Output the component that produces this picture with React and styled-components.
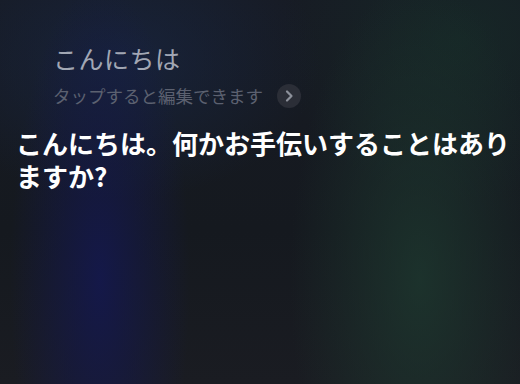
import React from 'react'
import styled, { createGlobalStyle } from 'styled-components';

const GlobalStyle = createGlobalStyle`
  html, body {
    margin: 0;
    padding: 0;
    background: #161a22;
  }
`

const App = () => {

  return (
    <Screen>
      <GlobalStyle />
      <Query>
        <Spoken>こんにちは</Spoken>
        <EditRow>
          <Hint>タップすると編集できます</Hint>
          <Chevron>
            <svg width="10" height="14" viewBox="0 0 10 14">
              <path d="M3 2.5 L7.5 7 L3 11.5" fill="none" stroke="#8d919b" strokeWidth="2.2" strokeLinecap="round" strokeLinejoin="round" />
            </svg>
          </Chevron>
        </EditRow>
      </Query>
      <Answer>こんにちは。何かお手伝いすることはありますか?</Answer>
    </Screen>
  )
}

const Screen = styled.main`
  width: 520px;
  height: 384px;
  overflow: hidden;
  box-sizing: border-box;
  padding: 41px 4px 0 16px;
  font-family: "Noto Sans CJK JP", "Noto Sans", sans-serif;
  background:
    radial-gradient(ellipse 90px 300px at 100px 280px, rgba(20, 24, 80, 0.85), rgba(20, 24, 80, 0) 100%),
    radial-gradient(ellipse 200px 140px at 120px 60px, rgba(24, 38, 68, 0.7), rgba(24, 38, 68, 0) 100%),
    radial-gradient(ellipse 130px 300px at 420px 280px, rgba(30, 58, 48, 0.75), rgba(30, 58, 48, 0) 100%),
    radial-gradient(ellipse 180px 160px at 460px 40px, rgba(22, 44, 40, 0.7), rgba(22, 44, 40, 0) 100%),
    linear-gradient(180deg, #171b24 0%, #15191f 60%, #1a1c22 100%);
`

const Query = styled.section`
  display: flex;
  flex-direction: column;
  padding-left: 37px;
`

const Spoken = styled.h2`
  margin: 0;
  font-size: 25px;
  font-weight: 400;
  line-height: 34px;
  color: #a2a7b4;
  letter-spacing: 0.5px;
`

const EditRow = styled.div`
  display: flex;
  align-items: center;
  gap: 14px;
  margin-top: 9px;
`

const Hint = styled.span`
  font-size: 17.5px;
  line-height: 24px;
  color: #5c6170;
`

const Chevron = styled.span`
  display: flex;
  align-items: center;
  justify-content: center;
  width: 24px;
  height: 24px;
  border-radius: 50%;
  background: #2b2e37;
`

const Answer = styled.p`
  margin: 18px 0 0;
  font-size: 26px;
  font-weight: 700;
  line-height: 33px;
  color: #ffffff;
`

export default App
